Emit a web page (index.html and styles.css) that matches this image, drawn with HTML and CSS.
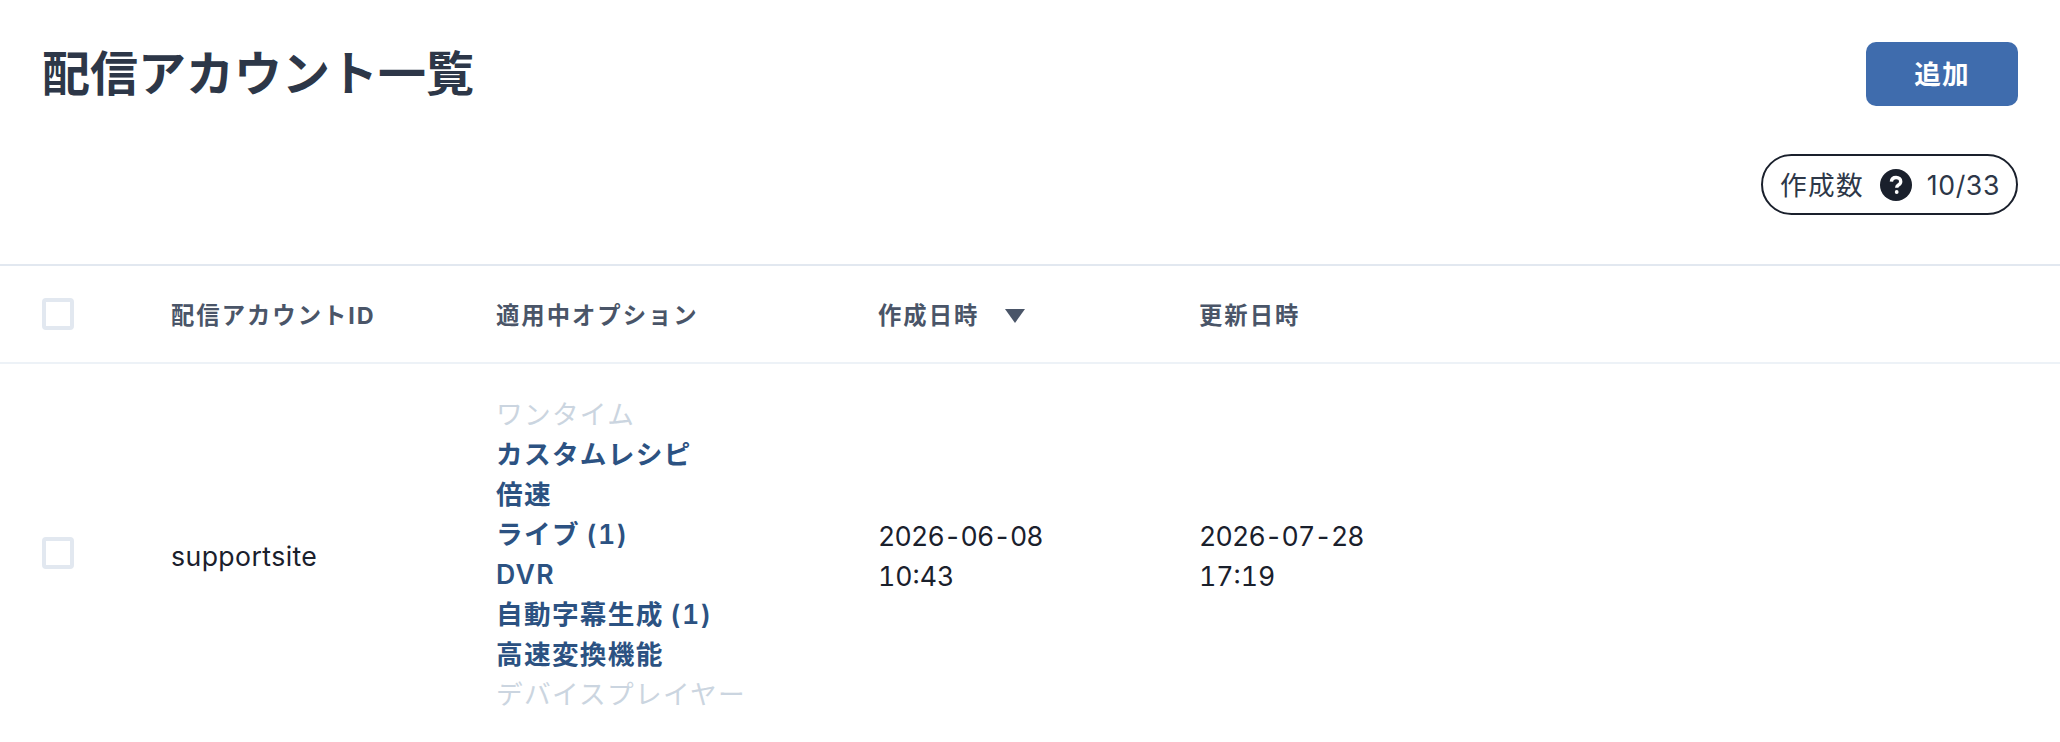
FILE: index.html
```html
<!DOCTYPE html>
<html lang="ja">
<head>
<meta charset="utf-8">
<title>配信アカウント一覧</title>
<link rel="stylesheet" href="styles.css">
</head>
<body>
<main class="page">
  <header class="head">
    <div class="title-row">
      <h1 class="title">配信アカウント一覧</h1>
      <button class="add-btn" type="button">追加</button>
    </div>
    <div class="quota-row">
      <div class="quota">
        <span class="quota-label">作成数</span>
        <svg class="help" viewBox="0 0 32 32" aria-hidden="true">
          <circle cx="16" cy="16" r="16" fill="#1a202c"/>
          <path class="help-q" d="M11.4 12.6c.2-2.6 2-4.1 4.7-4.1 2.800 0 4.600 1.600 4.600 3.900 0 1.700-.8 2.700-2.300 3.600-1.200.7-1.600 1.200-1.600 2.300v.5"/>
          <circle cx="16.700" cy="23" r="1.900" fill="#fff"/>
        </svg>
        <span class="quota-value">10/33</span>
      </div>
    </div>
  </header>
  <table class="accounts">
    <colgroup>
      <col class="c-check"><col class="c-id"><col class="c-opt"><col class="c-created"><col>
    </colgroup>
    <thead>
      <tr>
        <th class="cell-check"><span class="checkbox"></span></th>
        <th><span class="th-label">配信アカウントID</span></th>
        <th><span class="th-label">適用中オプション</span></th>
        <th><span class="sort th-label">作成日時<svg class="sort-icon" viewBox="0 0 20 14" aria-hidden="true"><path d="M0 0h20L10 14z"/></svg></span></th>
        <th><span class="th-label">更新日時</span></th>
      </tr>
    </thead>
    <tbody>
      <tr>
        <td class="cell-check"><span class="checkbox"></span></td>
        <td class="cell-id">supportsite</td>
        <td>
          <ul class="options">
            <li class="off">ワンタイム</li>
            <li class="on">カスタムレシピ</li>
            <li class="on">倍速</li>
            <li class="on">ライブ (1)</li>
            <li class="on">DVR</li>
            <li class="on">自動字幕生成 (1)</li>
            <li class="on">高速変換機能</li>
            <li class="off">デバイスプレイヤー</li>
          </ul>
        </td>
        <td><span class="date">2026-06-08</span><br><span class="time">10:43</span></td>
        <td><span class="date">2026-07-28</span><br><span class="time">17:19</span></td>
      </tr>
    </tbody>
  </table>
</main>
</body>
</html>
```
FILE: styles.css
```css
* { box-sizing: border-box; }
html, body { margin: 0; height: 100%; background: #fff; }
body { overflow: hidden; font-family: Inter, "Noto Sans CJK JP", sans-serif; color: #1a202c; font-size: 26.67px; line-height: 40px; letter-spacing: .6px; }
.page { width: 100%; }
.head { padding: 42px 42px 49px 42px; }
.title-row { display: flex; justify-content: space-between; align-items: flex-start; }
.title { margin: 0; font-size: 48px; line-height: 64px; font-weight: 700; color: #2d3748; letter-spacing: 0; }
.add-btn { width: 152px; height: 64px; border: 0; border-radius: 10px; background: #3f6cad; color: #fff; font: inherit; font-weight: 600; letter-spacing: 1px; padding: 0; }
.quota-row { display: flex; justify-content: flex-end; margin-top: 48px; }
.quota { display: flex; align-items: center; height: 61px; width: 257px; padding: 0 16px 0 17px; border: 2px solid #1a202c; border-radius: 31px; }
.quota-label { letter-spacing: 1.3px; color: #2d3748; white-space: nowrap; }
.help { width: 32px; height: 32px; margin-left: 16px; flex: none; }
.help-q { fill: none; stroke: #fff; stroke-width: 3.400; }
.quota-value { margin-left: auto; color: #2d3748; }
.accounts { width: 100%; table-layout: fixed; border-collapse: collapse; }
.c-check { width: 171px; }
.c-id { width: 325px; }
.c-opt { width: 382px; }
.c-created { width: 321px; }
th { height: 98px; padding: 0; text-align: left; font-size: 23.33px; letter-spacing: 2px; font-weight: 700; color: #4a5568; border-top: 2px solid #e2e8f0; border-bottom: 2px solid #edf2f7; vertical-align: middle; }
.th-label { display: block; padding-top: 3px; }
.sort.th-label { display: flex; align-items: center; }
td { padding: 32px 0; vertical-align: middle; }
.cell-check { padding-left: 42px; }
.cell-id { letter-spacing: .4px; }
.checkbox { display: block; width: 32px; height: 32px; border: 4px solid #e2e8f0; border-radius: 4px; background: #fff; }
td.cell-check .checkbox { margin-top: -7px; }
.sort-icon { width: 20px; height: 14px; margin-left: 26px; fill: #4a5568; }
.options { list-style: none; margin: -2px 0 2px; padding: 0; font-variant-numeric: tabular-nums; }
.options li { letter-spacing: 1.3px; word-spacing: -2px; white-space: nowrap; }
.date { font-variant-numeric: tabular-nums; letter-spacing: -.8px; }
.time { font-variant-numeric: tabular-nums; letter-spacing: 0; }
.on { color: #2c5282; font-weight: 600; }
.off { color: #cbd5e0; }
```
